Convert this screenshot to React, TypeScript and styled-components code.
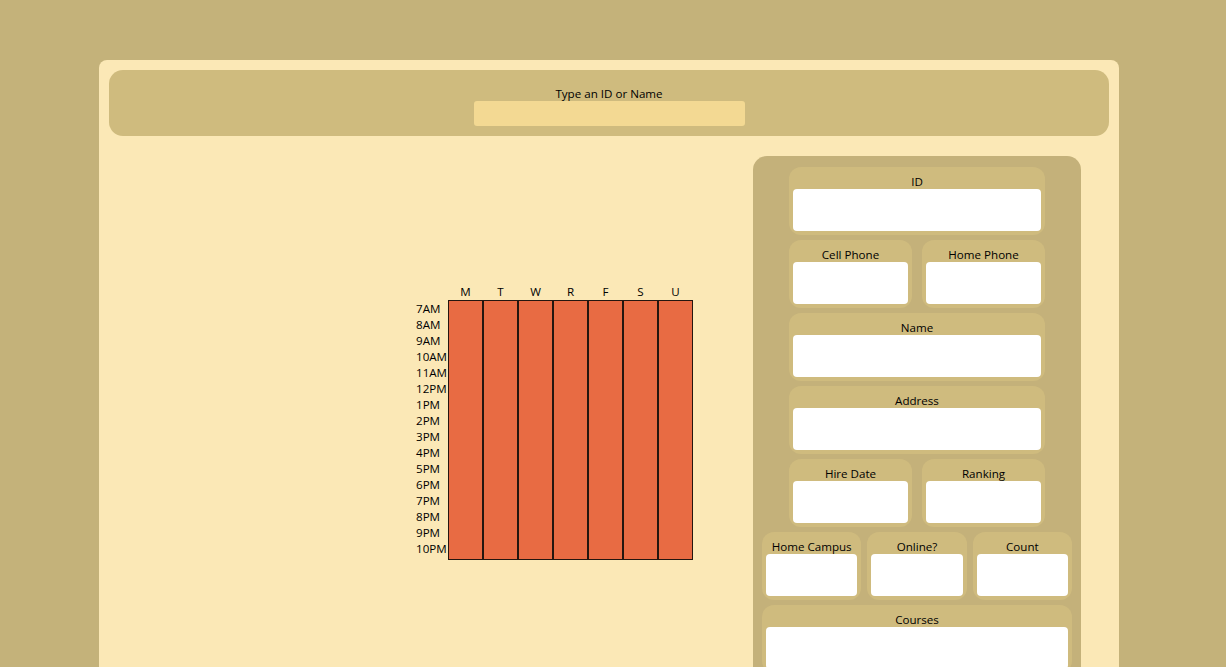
import React from "react";
import styled, { createGlobalStyle } from "styled-components";

const Global = createGlobalStyle`
  html, body { margin: 0; padding: 0; background: #c4b27a; overflow: hidden; }
  body { font-family: "Open Sans", "Noto Sans", sans-serif; font-size: 11.6px; color: #000; }
`;

const Page = styled.div`
  padding: 60px 0 0 99px;
  height: 667px;
  box-sizing: border-box;
`;

const Card = styled.div`
  width: 1020px;
  min-height: 700px;
  background: #fbe8b6;
  border-radius: 8px 8px 0 0;
  padding: 10px;
  box-sizing: border-box;
`;

const Header = styled.div`
  height: 66px;
  background: #cfbb7e;
  border-radius: 14px;
  display: flex;
  flex-direction: column;
  align-items: center;
  padding-top: 17px;
  box-sizing: border-box;
`;

const HeaderLabel = styled.div`
  line-height: 14px;
`;

const SearchBox = styled.div`
  width: 271px;
  height: 25px;
  background: #f3d993;
  border-radius: 3px;
`;

const Content = styled.div`
  display: flex;
  margin-top: 20px;
`;

const LeftArea = styled.div`
  flex: 1;
  padding: 128px 0 0 307px;
`;

const Schedule = styled.div`
  display: grid;
  grid-template-columns: 32px repeat(7, 35px);
  grid-template-rows: 16px 260px;
`;

const DayLabel = styled.div`
  text-align: center;
  line-height: 16px;
`;

const HourColumn = styled.div`
  display: flex;
  flex-direction: column;
  padding-top: 1px;
`;

const HourLabel = styled.div`
  height: 16px;
  line-height: 16px;
  white-space: nowrap;
`;

const DayBar = styled.div`
  background: #e86b43;
  border: 1px solid #24160f;
  box-sizing: border-box;
`;

const Panel = styled.div`
  width: 328px;
  margin-right: 28px;
  background: #c4b17a;
  border-radius: 14px 14px 0 0;
  padding: 11px 9px;
  box-sizing: border-box;
  display: flex;
  flex-direction: column;
  align-items: center;
  gap: 5px;
  min-height: 560px;
`;

const Row = styled.div<{ $cols: number; $width: number; $gap: number }>`
  display: grid;
  grid-template-columns: repeat(${(p) => p.$cols}, 1fr);
  column-gap: ${(p) => p.$gap}px;
  width: ${(p) => p.$width}px;
`;

const Group = styled.div`
  background: #cfbb7e;
  border-radius: 12px;
  padding: 4px;
  display: flex;
  flex-direction: column;
  align-items: center;
`;

const GroupLabel = styled.div`
  height: 18px;
  padding-top: 3px;
  line-height: 15px;
  box-sizing: border-box;
  white-space: nowrap;
`;

const Field = styled.div`
  align-self: stretch;
  height: 42px;
  background: #fff;
  border-radius: 4px;
`;

const days = ["M", "T", "W", "R", "F", "S", "U"];
const hours = [
  "7AM", "8AM", "9AM", "10AM", "11AM", "12PM", "1PM", "2PM",
  "3PM", "4PM", "5PM", "6PM", "7PM", "8PM", "9PM", "10PM",
];

const FieldGroup = ({ label }: { label: string }) => (
  <Group>
    <GroupLabel>{label}</GroupLabel>
    <Field />
  </Group>
);

export default function App() {
  return (
    <>
      <Global />
      <Page>
        <Card>
          <Header>
            <HeaderLabel>Type an ID or Name</HeaderLabel>
            <SearchBox />
          </Header>
          <Content>
            <LeftArea>
              <Schedule>
                <div />
                {days.map((d) => (
                  <DayLabel key={d}>{d}</DayLabel>
                ))}
                <HourColumn>
                  {hours.map((h) => (
                    <HourLabel key={h}>{h}</HourLabel>
                  ))}
                </HourColumn>
                {days.map((d) => (
                  <DayBar key={d} />
                ))}
              </Schedule>
            </LeftArea>
            <Panel>
              <Row $cols={1} $width={256} $gap={10}>
                <FieldGroup label="ID" />
              </Row>
              <Row $cols={2} $width={256} $gap={10}>
                <FieldGroup label="Cell Phone" />
                <FieldGroup label="Home Phone" />
              </Row>
              <Row $cols={1} $width={256} $gap={10}>
                <FieldGroup label="Name" />
              </Row>
              <Row $cols={1} $width={256} $gap={10}>
                <FieldGroup label="Address" />
              </Row>
              <Row $cols={2} $width={256} $gap={10}>
                <FieldGroup label="Hire Date" />
                <FieldGroup label="Ranking" />
              </Row>
              <Row $cols={3} $width={310} $gap={6}>
                <FieldGroup label="Home Campus" />
                <FieldGroup label="Online?" />
                <FieldGroup label="Count" />
              </Row>
              <Row $cols={1} $width={310} $gap={6}>
                <FieldGroup label="Courses" />
              </Row>
            </Panel>
          </Content>
        </Card>
      </Page>
    </>
  );
}
